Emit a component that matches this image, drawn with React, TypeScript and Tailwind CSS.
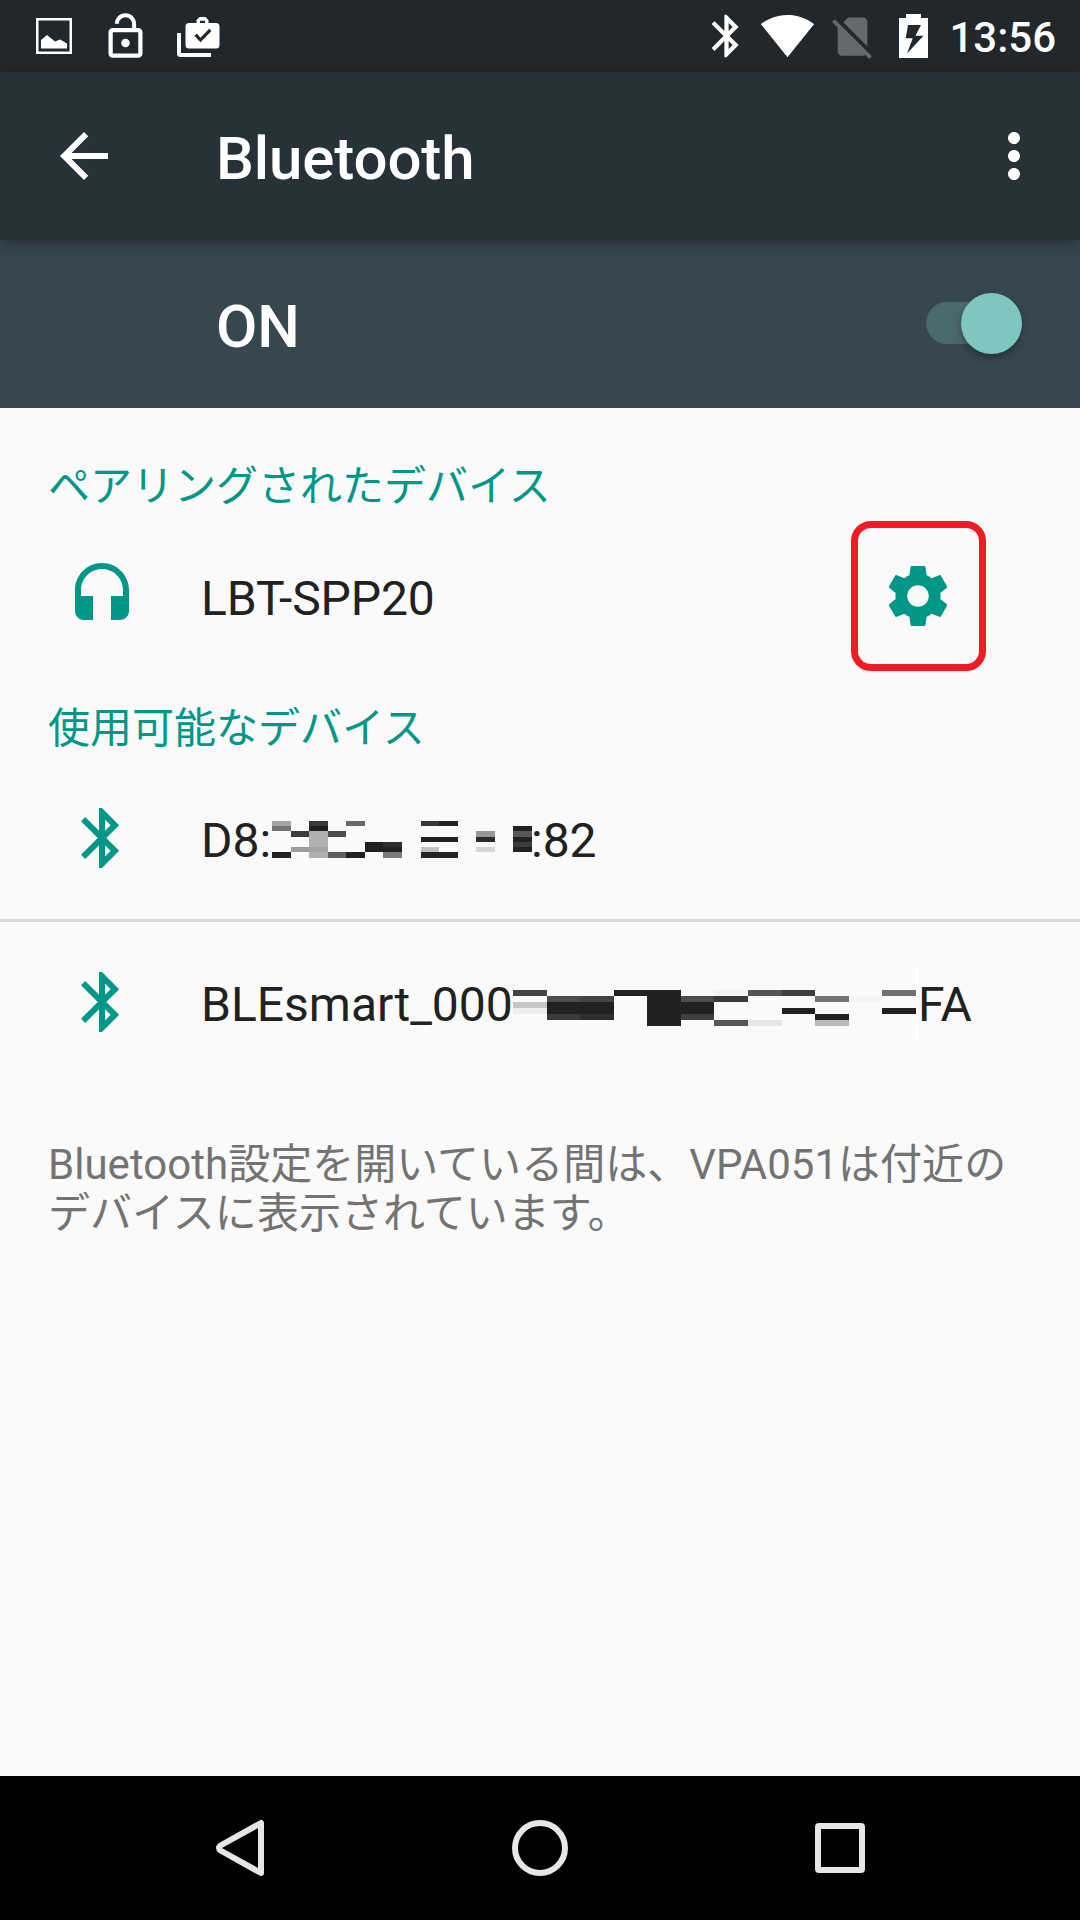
import React from 'react';

type IconProps = { d: string; className?: string };

const Icon = ({ d, className = 'w-[72px] h-[72px]' }: IconProps) => (
    <svg viewBox="0 0 24 24" fill="currentColor" className={`shrink-0 ${className}`}>
        <path d={d} />
    </svg>
);

const icons = {
    back: 'M20 11H7.83l5.59-5.59L12 4l-8 8 8 8 1.41-1.41L7.83 13H20v-2z',
    more: 'M12 8c1.1 0 2-.9 2-2s-.9-2-2-2-2 .9-2 2 .9 2 2 2zm0 2c-1.1 0-2 .9-2 2s.9 2 2 2 2-.9 2-2-.9-2-2-2zm0 6c-1.1 0-2 .9-2 2s.9 2 2 2 2-.9 2-2-.9-2-2-2z',
    bluetooth:
        'M17.71 7.71L12 2h-1v7.59L6.41 5 5 6.41 10.59 12 5 17.59 6.41 19 11 14.41V22h1l5.71-5.71-4.3-4.29 4.3-4.29zM13 5.83l1.88 1.88L13 9.59V5.83zm1.88 10.46L13 18.17v-3.76l1.88 1.88z',
    headset:
        'M12 1c-4.97 0-9 4.03-9 9v7c0 1.66 1.34 3 3 3h3v-8H5v-2c0-3.87 3.13-7 7-7s7 3.13 7 7v2h-4v8h3c1.66 0 3-1.34 3-3v-7c0-4.97-4.03-9-9-9z',
    settings:
        'M19.43 12.98c.04-.32.07-.64.07-.98s-.03-.66-.07-.98l2.11-1.65c.19-.15.24-.42.12-.64l-2-3.46c-.12-.22-.39-.3-.61-.22l-2.49 1c-.52-.4-1.08-.73-1.69-.98l-.38-2.65C14.46 2.18 14.25 2 14 2h-4c-.25 0-.46.18-.49.42l-.38 2.65c-.61.25-1.17.59-1.69.98l-2.49-1c-.23-.09-.49 0-.61.22l-2 3.46c-.13.22-.07.49.12.64l2.11 1.65c-.04.32-.07.65-.07.98s.03.66.07.98l-2.11 1.65c-.19.15-.24.42-.12.64l2 3.46c.12.22.39.3.61.22l2.49-1c.52.4 1.08.73 1.69.98l.38 2.65c.03.24.24.42.49.42h4c.25 0 .46-.18.49-.42l.38-2.65c.61-.25 1.17-.59 1.69-.98l2.49 1c.23.09.49 0 .61-.22l2-3.46c.12-.22.07-.49-.12-.64l-2.11-1.65zM12 15.6c-1.98 0-3.6-1.62-3.6-3.6s1.62-3.6 3.6-3.6 3.6 1.62 3.6 3.6-1.62 3.6-3.6 3.6z',
    lockOpen:
        'M12 17c1.1 0 2-.9 2-2s-.9-2-2-2-2 .9-2 2 .9 2 2 2zm6-9h-1V6c0-2.76-2.24-5-5-5S7 3.24 7 6h1.9c0-1.71 1.39-3.1 3.1-3.1 1.71 0 3.1 1.39 3.1 3.1v2H6c-1.1 0-2 .9-2 2v10c0 1.1.9 2 2 2h12c1.1 0 2-.9 2-2V10c0-1.1-.9-2-2-2zm0 12H6V10h12v10z',
    wifi: 'M12.01 21.49L23.64 7c-.45-.34-4.93-4-11.64-4C5.28 3 .81 6.66.36 7l11.63 14.49.01.01.01-.01z',
    noSim: 'M18.99 5c0-1.1-.89-2-1.99-2h-7L7.66 5.34 19 16.68 18.99 5zM3.65 3.88L2.38 5.15 5 7.77V19c0 1.1.9 2 2 2h10.01c.35 0 .67-.1.96-.26l1.88 1.88 1.27-1.27L3.65 3.88z',
};

// Each block is [x, y, width, height, color]
type Block = [number, number, number, number, string];

const addressBlocks: Block[] = [
    [0, 11, 19, 5, '#a2a2a2'],
    [0, 16, 19, 5, '#727272'],
    [0, 42, 19, 6, '#222222'],
    [19, 21, 18, 6, '#3c3c3c'],
    [19, 37, 18, 5, '#9c9c9c'],
    [37, 11, 19, 5, '#393939'],
    [37, 16, 19, 5, '#212121'],
    [37, 21, 19, 16, '#b0b0b0'],
    [37, 37, 19, 5, '#a4a4a4'],
    [37, 42, 19, 6, '#b0b0b0'],
    [56, 21, 18, 6, '#4d4d4d'],
    [56, 42, 18, 6, '#5f5f5f'],
    [74, 11, 19, 5, '#696969'],
    [74, 42, 19, 6, '#212121'],
    [93, 32, 18, 10, '#212121'],
    [111, 32, 19, 5, '#2f2f2f'],
    [111, 37, 19, 5, '#212121'],
    [111, 42, 19, 6, '#7a7a7a'],
    [149, 11, 18, 5, '#373737'],
    [167, 11, 19, 5, '#212121'],
    [149, 27, 37, 5, '#212121'],
    [149, 37, 18, 5, '#c0c2c1'],
    [149, 42, 37, 6, '#232424'],
    [204, 21, 19, 6, '#979797'],
    [204, 27, 19, 5, '#2b2b2b'],
    [204, 37, 19, 5, '#d7d7d7'],
    [241, 16, 19, 5, '#212121'],
    [241, 21, 19, 6, '#585858'],
    [241, 27, 19, 5, '#212121'],
    [241, 32, 19, 5, '#3c3c3c'],
    [241, 37, 19, 5, '#212121'],
];

const serialBlocks: Block[] = [
    [0, 24, 34, 6, '#444444'],
    [0, 36, 34, 6, '#c7c7c7'],
    [0, 42, 34, 6, '#eeeeee'],
    [34, 30, 33, 6, '#4d4d4d'],
    [67, 30, 34, 6, '#444444'],
    [34, 36, 67, 12, '#212121'],
    [34, 48, 33, 6, '#3a3a3a'],
    [67, 48, 34, 6, '#2e2e2e'],
    [101, 24, 33, 6, '#212121'],
    [134, 24, 34, 36, '#212121'],
    [168, 30, 33, 6, '#4d4d4d'],
    [168, 36, 33, 12, '#212121'],
    [168, 48, 33, 6, '#3f3f3f'],
    [201, 24, 34, 6, '#f3f3f3'],
    [201, 30, 34, 6, '#3a3a3a'],
    [201, 54, 34, 6, '#575757'],
    [235, 24, 34, 6, '#555555'],
    [235, 54, 34, 6, '#e6e6e6'],
    [269, 24, 33, 6, '#3f3f3f'],
    [269, 42, 33, 6, '#212121'],
    [302, 30, 34, 6, '#757575'],
    [302, 48, 34, 6, '#212121'],
    [302, 54, 34, 6, '#bababa'],
    [336, 30, 33, 6, '#f5f5f5'],
    [369, 24, 34, 6, '#707070'],
    [369, 42, 34, 6, '#212121'],
];

const Mosaic = ({ blocks, className }: { blocks: Block[]; className: string }) => (
    <svg shapeRendering="crispEdges" className={`shrink-0 ${className}`}>
        {blocks.map(([x, y, w, h, color]) => (
            <rect key={`${x}-${y}`} x={x} y={y} width={w} height={h} fill={color} />
        ))}
    </svg>
);

const StatusBar = () => (
    <div className="flex h-[72px] items-center justify-between bg-[#21272b] pl-9 pr-[24px]">
        <div className="flex items-center">
            <svg className="h-[72px] w-9" viewBox="0 0 36 72" fill="white">
                <path fillRule="evenodd" d="M0 18h36v36H0zM2.5 20.5v31h31v-31z" />
                <path d="M5 40l6-5 8 6.500 5-2 7 4v5H5z" />
            </svg>
            <Icon d={icons.lockOpen} className="ml-[28px] h-[51px] w-[51px]" />
            <svg className="ml-[26px] h-[72px] w-[43px]" viewBox="0 0 43 72" fill="white">
                <path d="M0 33h4v20h30v4H3.500a3.500 3.500 0 0 1-3.500-3.500z" />
                <path
                    fillRule="evenodd"
                    d="M12 23h7.500v-3l3-3h6l3 3v3H39a3.500 3.500 0 0 1 3.500 3.500V45a3.500 3.500 0 0 1-3.500 3.500H12A3.500 3.500 0 0 1 8.500 45V26.500A3.500 3.500 0 0 1 12 23zM23 20.800V23h5v-2.200zM19.700 33.500L17.500 36l6 6.300 11-11.300-2.300-2.300-8.800 9z"
                />
            </svg>
        </div>
        <div className="flex items-center">
            <Icon d={icons.bluetooth} className="h-[52px] w-[51px]" />
            <Icon d={icons.wifi} className="ml-[8px] h-[55px] w-[55px] -translate-y-[1px]" />
            <Icon d={icons.noSim} className="ml-[12px] h-[51px] w-[51px] text-[#66696b]" />
            <svg className="ml-[21px] h-[72px] w-[29px]" viewBox="0 0 29 72" fill="white">
                <path
                    fillRule="evenodd"
                    d="M7 14h15v4h7v40H0V18h7zM9 25L6.700 38.300h7L8 53.500 24.500 35.700h-8L22 25z"
                />
            </svg>
            <span className="ml-[21px] pt-[3px] text-[42px] font-medium leading-none">13:56</span>
        </div>
    </div>
);

const Toolbar = () => (
    <header className="relative z-10 flex h-[168px] items-center bg-[#263238] pl-12 pr-[30px] shadow-[0_4px_14px_rgba(0,0,0,0.3)]">
        <Icon d={icons.back} />
        <h1 className="ml-24 flex-1 pt-[5px] text-[60px] font-medium leading-none tracking-[-0.1px]">Bluetooth</h1>
        <Icon d={icons.more} />
    </header>
);

const Switch = () => (
    <div className="relative -mt-[2px] h-[42px] w-[96px] rounded-full bg-[#4a696b]">
        <span className="absolute -top-[9px] right-0 h-[61px] w-[61px] rounded-full bg-[#7fc6c0] shadow-[0_4px_7px_rgba(0,0,0,0.3)]" />
    </div>
);

const DeviceRow = ({ icon, children }: { icon: string; children: React.ReactNode }) => (
    <div className="flex h-[161px] items-center pb-px pl-[66px] text-[48px] leading-none text-[#212121]">
        <Icon d={icon} className="h-[72px] w-[72px] text-[#009688]" />
        <div className="ml-[63px] flex flex-1 items-center">{children}</div>
    </div>
);

const Category = ({ children }: { children: React.ReactNode }) => (
    <h2 className="flex h-[81px] items-center pl-12 pt-[22px] text-[42px] leading-none text-[#009688]">{children}</h2>
);

const NavBar = () => (
    <nav className="flex h-[144px] items-center bg-black text-[#e6e6e6]">
        <svg className="ml-[210px] h-[60px] w-[60px]" viewBox="0 0 60 60" fill="none" stroke="currentColor" strokeWidth="6" strokeLinejoin="round">
            <path d="M51 5v50L10.500 32.500Q7.500 30 10.500 27.500z" />
        </svg>
        <svg className="ml-[240px] h-[60px] w-[60px]" viewBox="0 0 60 60" fill="none" stroke="currentColor" strokeWidth="6">
            <circle cx="30" cy="30" r="25" />
        </svg>
        <svg className="ml-[240px] h-[60px] w-[60px]" viewBox="0 0 60 60" fill="none" stroke="currentColor" strokeWidth="6">
            <rect x="8" y="8" width="44" height="44" rx="1" />
        </svg>
    </nav>
);

const App = () => {
    return (
        <div className="flex h-[1920px] w-[1080px] flex-col overflow-hidden bg-[#fafafa] font-['Roboto','Noto_Sans_CJK_JP',sans-serif] text-white">
            <StatusBar />
            <Toolbar />
            <div className="flex h-[168px] items-center justify-between bg-[#37474f] pl-[216px] pr-[58px]">
                <span className="pt-[5px] text-[60px] font-medium leading-none">ON</span>
                <Switch />
            </div>

            <main className="flex-1 pt-[27px]" lang="ja">
                <Category>ペアリングされたデバイス</Category>
                <DeviceRow icon={icons.headset}>
                    <span className="flex-1 pt-[5px] tracking-[-0.1px]">LBT-SPP20</span>
                    <div className="relative mr-[126px]">
                        <Icon d={icons.settings} className="h-[72px] w-[72px] text-[#009688]" />
                        {/* highlight frame around the settings button */}
                        <div className="absolute -left-[31px] -top-[39px] h-[150px] w-[135px] rounded-[20px] border-[7px] border-[#ee1c25]" />
                    </div>
                </DeviceRow>

                <Category>使用可能なデバイス</Category>
                <DeviceRow icon={icons.bluetooth}>
                    <span className="w-[71px] shrink-0 pt-[5px]">D8:</span>
                    <Mosaic blocks={addressBlocks} className="mt-px h-[57px] w-[260px]" />
                    <span className="-ml-px pt-[5px]">:82</span>
                </DeviceRow>
                <div className="h-[3px] bg-[#dadada]" />
                <DeviceRow icon={icons.bluetooth}>
                    <span className="w-[312px] shrink-0 pt-[5px]">BLEsmart_000</span>
                    <Mosaic blocks={serialBlocks} className="mt-[3px] h-[75px] w-[403px]" />
                    <span className="mt-[3px] h-[75px] w-[2px] bg-white" />
                    <span className="pt-[5px]">FA</span>
                </DeviceRow>

                <p className="px-12 pt-[57px] text-[42px] leading-[49px] tracking-[0.03px] text-[#737373]">
                    Bluetooth設定を開いている間は、VPA051は付近の
                    <br />
                    デバイスに表示されています。
                </p>
            </main>

            <NavBar />
        </div>
    );
};

export default App;
